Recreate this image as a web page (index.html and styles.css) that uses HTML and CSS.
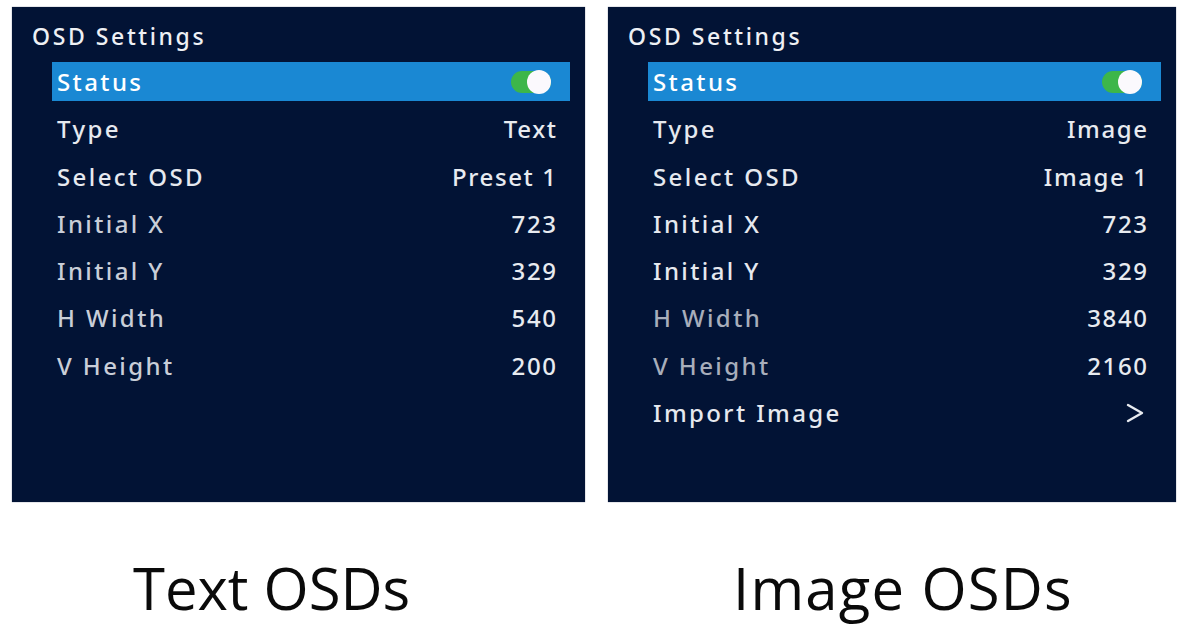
FILE: index.html
```html
<!DOCTYPE html>
<html lang="en">
<head>
<meta charset="utf-8">
<title>OSD Settings</title>
<link rel="stylesheet" href="styles.css">
</head>
<body>
<main class="compare">
  <figure class="column column-text">
    <section class="panel">
      <h2 class="panel-title">OSD Settings</h2>
      <ul class="menu">
        <li class="row row-active"><span class="label">Status</span><span class="switch"><span class="knob"></span></span></li>
        <li class="row"><span class="label">Type</span><span class="value">Text</span></li>
        <li class="row"><span class="label">Select OSD</span><span class="value">Preset 1</span></li>
        <li class="row"><span class="label dim">Initial X</span><span class="value">723</span></li>
        <li class="row"><span class="label dim">Initial Y</span><span class="value">329</span></li>
        <li class="row"><span class="label dim">H Width</span><span class="value">540</span></li>
        <li class="row"><span class="label dim">V Height</span><span class="value">200</span></li>
      </ul>
    </section>
    <figcaption class="caption">Text OSDs</figcaption>
  </figure>
  <figure class="column column-image">
    <section class="panel">
      <h2 class="panel-title">OSD Settings</h2>
      <ul class="menu">
        <li class="row row-active"><span class="label">Status</span><span class="switch"><span class="knob"></span></span></li>
        <li class="row"><span class="label">Type</span><span class="value">Image</span></li>
        <li class="row"><span class="label">Select OSD</span><span class="value">Image 1</span></li>
        <li class="row"><span class="label">Initial X</span><span class="value">723</span></li>
        <li class="row"><span class="label">Initial Y</span><span class="value">329</span></li>
        <li class="row"><span class="label dimmer">H Width</span><span class="value">3840</span></li>
        <li class="row"><span class="label dimmer">V Height</span><span class="value">2160</span></li>
        <li class="row">
          <span class="label">Import Image</span>
          <svg class="chevron" width="20" height="20" viewBox="0 0 20 20" aria-hidden="true">
            <polyline points="3,2 17,10 3,18" fill="none" stroke="#e8ebf0" stroke-width="2.4" stroke-linecap="round" stroke-linejoin="round"/>
          </svg>
        </li>
      </ul>
    </section>
    <figcaption class="caption">Image OSDs</figcaption>
  </figure>
</main>
</body>
</html>
```
FILE: styles.css
```css
html, body {
  margin: 0;
  background: #ffffff;
}

body {
  width: 1196px;
  height: 628px;
  overflow: hidden;
  font-family: "Noto Sans", "Open Sans", sans-serif;
}

.compare {
  display: flex;
  gap: 23px;
  padding: 7px 0 0 12px;
}

.column {
  margin: 0;
  display: flex;
  flex-direction: column;
}

.column-text { width: 573px; }
.column-image { width: 568px; }

.panel {
  height: 495px;
  box-sizing: border-box;
  background: #021335;
  padding: 14px 15px 0 20px;
  box-shadow: 0 0 1px rgba(2, 19, 53, 0.6);
}

.panel-title {
  margin: 0 0 11px;
  font-size: 23px;
  font-weight: 500;
  line-height: 30px;
  color: #eef0f4;
  letter-spacing: 2.6px;
}

.menu {
  list-style: none;
  margin: 0 0 0 20px;
  padding: 0;
  display: flex;
  flex-direction: column;
  gap: 8.3px;
}

.row {
  height: 39px;
  display: flex;
  align-items: center;
  justify-content: space-between;
  padding: 0 14px 0 5px;
  font-size: 24px;
  font-weight: 500;
  color: #e6e9ef;
  letter-spacing: 2.4px;
}

.row-active {
  background: #1a88d3;
  color: #ffffff;
}

.label.dim { color: #c9ced8; }
.label.dimmer { color: #a8aebb; }

.value {
  color: #e8ebf0;
  letter-spacing: 1.6px;
  margin-right: -1.6px;
}

.chevron {
  display: block;
  margin-right: 2px;
}

.switch {
  width: 40px;
  height: 22px;
  border-radius: 11px;
  background: #3db64a;
  display: flex;
  justify-content: flex-end;
  align-items: center;
  margin-right: 5px;
}

.knob {
  width: 24px;
  height: 24px;
  border-radius: 50%;
  background: #fbf9fd;
}

.caption {
  margin: 0;
  padding-top: 57px;
  font-family: "Open Sans", "Noto Sans", sans-serif;
  font-size: 58px;
  line-height: 58px;
  color: #0a0a0a;
}

.column-text .caption { padding-left: 121px; }
.column-image .caption {
  padding-left: 125px;
  letter-spacing: 1.2px;
}
```
